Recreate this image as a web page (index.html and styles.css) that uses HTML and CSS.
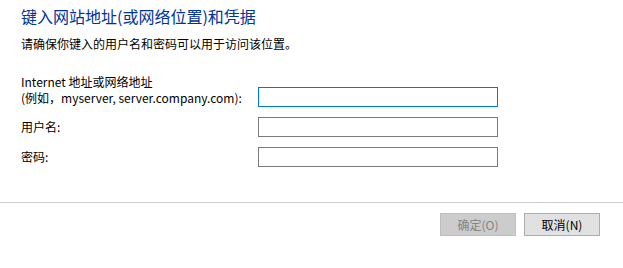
FILE: index.html
```html
<!DOCTYPE html>
<html lang="zh-CN">
<head>
<meta charset="utf-8">
<title>凭据</title>
<link rel="stylesheet" href="styles.css">
</head>
<body>
<div class="dialog">
  <div class="content">
    <h1 class="title">键入网站地址(或网络位置)和凭据</h1>
    <p class="desc">请确保你键入的用户名和密码可以用于访问该位置。</p>
    <div class="form">
      <label class="lbl lbl-multi" for="addr">Internet 地址或网络地址<br>(例如，myserver, server.company.com):</label>
      <input class="field field-focus field-end" id="addr" type="text">
      <label class="lbl" for="user">用户名:</label>
      <input class="field" id="user" type="text">
      <label class="lbl" for="pass">密码:</label>
      <input class="field" id="pass" type="password">
    </div>
  </div>
  <div class="footer">
    <button class="btn btn-disabled" type="button" disabled>确定(O)</button>
    <button class="btn" type="button">取消(N)</button>
  </div>
</div>
</body>
</html>
```
FILE: styles.css
```css
html, body {
  margin: 0;
  padding: 0;
  background: #ffffff;
}
body {
  font-family: "Noto Sans CJK SC", "Noto Sans", sans-serif;
  font-size: 12px;
  line-height: 16px;
  color: #000000;
}
.dialog {
  width: 623px;
  height: 268px;
  display: flex;
  flex-direction: column;
}
.content {
  padding: 5px 0 0 21px;
}
.title {
  margin: 0;
  font-size: 16px;
  line-height: 22px;
  font-weight: normal;
  color: #003399;
}
.desc {
  margin: 9px 0 0 0;
}
.form {
  margin-top: 22px;
  display: grid;
  grid-template-columns: 237px 240px;
  grid-template-rows: 33px 20px 20px;
  row-gap: 10px;
  align-items: center;
}
.lbl-multi {
  align-self: start;
}
.field {
  box-sizing: border-box;
  width: 240px;
  height: 20px;
  margin: 0;
  padding: 0 4px;
  border: 1px solid #7a7a7a;
  background: #ffffff;
  font: inherit;
  outline: none;
}
.field-focus {
  border-color: #0078d7;
}
.field-end {
  align-self: end;
}
.footer {
  margin-top: 35px;
  border-top: 1px solid #cccccc;
  padding: 10px 23px 0 0;
  display: flex;
  justify-content: flex-end;
  gap: 8px;
}
.btn {
  box-sizing: border-box;
  width: 76px;
  height: 23px;
  margin: 0;
  padding: 0;
  border: 1px solid #adadad;
  background: #e1e1e1;
  font: inherit;
  color: #000000;
}
.btn-disabled {
  border-color: #bfbfbf;
  background: #cccccc;
  color: #838383;
}
```
